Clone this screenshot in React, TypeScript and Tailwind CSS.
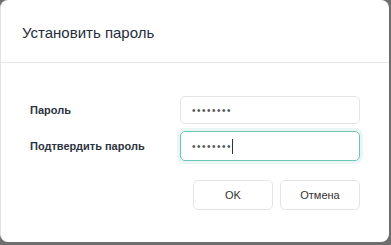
import React from 'react';

export default function App() {
  return (
    <div className="w-[391px] h-[245px] bg-[#6e6e6e] overflow-hidden" style={{ fontFamily: '"Liberation Sans", "Noto Sans", sans-serif' }}>
      <div className="w-[389px] h-[242px] bg-white rounded-lg border-l border-[#e3e3e3] flex flex-col">
        <div className="h-[63px] border-b border-[#e6e6e6] flex items-center pl-[21px] pt-[4px]">
          <span className="text-[15px] text-[#1f2d3d]">Установить пароль</span>
        </div>
        <div className="flex flex-col pt-[33px] pl-[29px] pr-[29px] gap-[7px]">
          <div className="flex items-center h-[28px]">
            <label className="w-[150px] text-[11px] font-bold text-[#2b3340]">Пароль</label>
            <div className="flex-1 h-[28px] border border-[#e4e4e4] rounded-[5px] flex items-center pl-[11px]">
              <span className="text-[10px] tracking-[1.5px] text-[#555]">••••••••</span>
            </div>
          </div>
          <div className="flex items-center h-[30px]">
            <label className="w-[150px] text-[11px] font-bold text-[#2b3340]">Подтвердить пароль</label>
            <div className="flex-1 h-[30px] border border-[#6cc4b7] rounded-[5px] flex items-center pl-[11px] shadow-[0_0_0_3px_#eaf6f4]">
              <span className="text-[10px] tracking-[1.5px] text-[#555]">••••••••</span>
              <span className="w-px h-[15px] bg-[#333]"></span>
            </div>
          </div>
        </div>
        <div className="flex justify-end gap-[7px] pr-[29px] pt-[19px]">
          <button className="w-[80px] h-[30px] border border-[#e4e4e4] rounded-[5px] text-[11px] text-[#333]">OK</button>
          <button className="w-[80px] h-[30px] border border-[#e4e4e4] rounded-[5px] text-[11px] text-[#333]">Отмена</button>
        </div>
      </div>
    </div>
  );
}
